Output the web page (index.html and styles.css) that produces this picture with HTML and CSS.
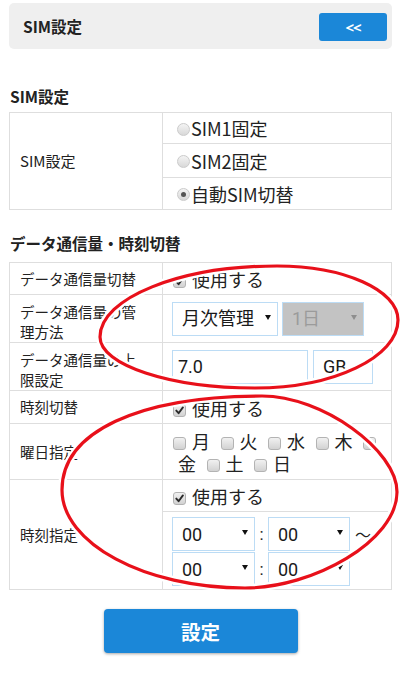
FILE: index.html
```html
<!DOCTYPE html>
<html lang="ja">
<head>
<meta charset="utf-8">
<title>SIM設定</title>
<link rel="stylesheet" href="styles.css">
</head>
<body>
<div class="page">
  <div class="topbar">
    <span class="topbar-title">SIM設定</span>
    <button class="back">&lt;&lt;</button>
  </div>

  <h2 class="sec sec1">SIM設定</h2>
  <div class="tbl tbl1">
    <div class="cell lab lab1 span3">SIM設定</div>
    <div class="cell val"><span class="radio"></span><span>SIM1固定</span></div>
    <div class="cell val"><span class="radio"></span><span>SIM2固定</span></div>
    <div class="cell val"><span class="radio on"></span><span>自動SIM切替</span></div>
  </div>

  <h2 class="sec sec2">データ通信量・時刻切替</h2>
  <div class="tbl tbl2">
    <div class="cell lab">データ通信量切替</div>
    <div class="cell val">
      <span class="cb"><svg viewBox="0 0 9 9"><path d="M1.3 4.6 L3.6 7.2 L7.9 1.4" fill="none" stroke="#2b2b2b" stroke-width="1.9" stroke-linecap="round" stroke-linejoin="round"/></svg></span><span class="cbtext">使用する</span>
    </div>

    <div class="cell lab two">データ通信量の管理方法</div>
    <div class="cell val gap4">
      <div class="sel w106"><span>月次管理</span><span class="arr"></span></div>
      <div class="sel w82 disabled"><span>1日</span><span class="arr"></span></div>
    </div>

    <div class="cell lab two">データ通信量の上限設定</div>
    <div class="cell val gap5">
      <div class="inp w136">7.0</div>
      <div class="inp w60 gb">GB</div>
    </div>

    <div class="cell lab">時刻切替</div>
    <div class="cell val">
      <span class="cb"><svg viewBox="0 0 9 9"><path d="M1.3 4.6 L3.6 7.2 L7.9 1.4" fill="none" stroke="#2b2b2b" stroke-width="1.9" stroke-linecap="round" stroke-linejoin="round"/></svg></span><span class="cbtext">使用する</span>
    </div>

    <div class="cell lab">曜日指定</div>
    <div class="cell days">
      <span class="cb"></span><span class="day">月</span>
      <span class="cb"></span><span class="day">火</span>
      <span class="cb"></span><span class="day">水</span>
      <span class="cb"></span><span class="day">木</span>
      <span class="cb"></span><span class="day">金</span>
      <span class="cb"></span><span class="day">土</span>
      <span class="cb"></span><span class="day">日</span>
    </div>

    <div class="cell lab">時刻指定</div>
    <div class="cell timecell">
      <div class="tsub1">
        <span class="cb"><svg viewBox="0 0 9 9"><path d="M1.3 4.6 L3.6 7.2 L7.9 1.4" fill="none" stroke="#2b2b2b" stroke-width="1.9" stroke-linecap="round" stroke-linejoin="round"/></svg></span><span class="cbtext">使用する</span>
      </div>
      <div class="tsub2">
        <div class="trow">
          <div class="sel w83"><span>00</span><span class="arr"></span></div>
          <span class="colon">:</span>
          <div class="sel w82"><span>00</span><span class="arr"></span></div>
          <span class="tilde">〜</span>
        </div>
        <div class="trow">
          <div class="sel w83"><span>00</span><span class="arr"></span></div>
          <span class="colon">:</span>
          <div class="sel w82"><span>00</span><span class="arr"></span></div>
        </div>
      </div>
    </div>
  </div>

  <button class="submit">設定</button>
</div>

<svg class="marks" width="400" height="673" viewBox="0 0 400 673">
  <g fill="none" stroke-linejoin="round">
    <path class="halo" d="M100 337 C100 298 180 266 277 266 C344 266 398 290 398 320 C398 357 334 388 255 388 C170 388 100 365 100 337 Z"/>
    <path class="halo" d="M62 490 C62 432 138 396 262 396 C322 396 397 450 397 492 C397 541 313 588 245 588 C144 588 62 543 62 490 Z"/>
    <path class="ring" d="M100 337 C100 298 180 266 277 266 C344 266 398 290 398 320 C398 357 334 388 255 388 C170 388 100 365 100 337 Z"/>
    <path class="ring" d="M62 490 C62 432 138 396 262 396 C322 396 397 450 397 492 C397 541 313 588 245 588 C144 588 62 543 62 490 Z"/>
  </g>
</svg>
</body>
</html>
```
FILE: styles.css
```css
* { box-sizing: border-box; }

html, body {
  margin: 0;
  padding: 0;
  background: #ffffff;
}

body {
  width: 400px;
  height: 673px;
  position: relative;
  overflow: hidden;
  font-family: "Noto Sans CJK JP", "Noto Sans", sans-serif;
  color: #222222;
}

.page {
  padding: 3px 8px 0 9px;
}

/* top bar */
.topbar {
  height: 46px;
  background: #efefef;
  border-radius: 5px;
  display: flex;
  align-items: center;
  justify-content: space-between;
  padding: 0 5px 0 14px;
}

.topbar-title {
  font-size: 15.5px;
  font-weight: 700;
  line-height: 20px;
}

.back {
  width: 68px;
  height: 28px;
  margin-top: 2px;
  padding: 0;
  border: 0;
  border-radius: 3px;
  background: #1b87d8;
  color: #ffffff;
  font: 700 15px "Noto Sans", "DejaVu Sans", sans-serif;
  letter-spacing: -1px;
}

/* section headings */
.sec {
  margin: 0;
  padding-left: 1px;
  font-size: 15.5px;
  font-weight: 700;
  line-height: 20px;
}

.sec1 { margin-top: 37px; margin-bottom: 6px; }
.sec2 { margin-top: 23px; margin-bottom: 9px; }

/* tables */
.tbl {
  display: grid;
  grid-template-columns: 153px 1fr;
  border-top: 1px solid #dedede;
  border-left: 1px solid #dedede;
}

.tbl1 { grid-template-rows: 31px 34px 32px; }
.tbl2 { grid-template-rows: 32px 48px 48px 33px 56px 110px; }

.cell {
  border-right: 1px solid #dedede;
  border-bottom: 1px solid #dedede;
  display: flex;
  align-items: center;
  min-width: 0;
}

.span3 { grid-row: 1 / span 3; }

.lab {
  font-size: 14.5px;
  line-height: 20px;
  padding: 0 12px 0 10px;
}

.lab1 { font-size: 15px; }

.lab.two { padding-top: 6px; }

.val {
  padding-left: 9px;
  font-size: 18px;
  line-height: 22px;
}

.gap4 { gap: 4px; }
.gap5 { gap: 5px; }

/* radio */
.radio {
  flex: none;
  width: 13px;
  height: 13px;
  margin: 2px 1px 0 5px;
  border-radius: 50%;
  border: 1px solid #cbcbcb;
  background: linear-gradient(#f4f4f4, #d8d8d8);
  position: relative;
}

.radio.on::after {
  content: "";
  position: absolute;
  left: 3px;
  top: 3px;
  width: 5px;
  height: 5px;
  border-radius: 50%;
  background: #555555;
}

/* checkbox */
.cb {
  flex: none;
  width: 13px;
  height: 13px;
  margin: 6px 0 0 1px;
  border: 1px solid #b3b3b3;
  border-radius: 3px;
  background: linear-gradient(#f1f1f1, #d2d2d2);
  display: flex;
  align-items: center;
  justify-content: center;
}

.cb svg {
  width: 9px;
  height: 9px;
  display: block;
}

.cbtext {
  margin: 1px 0 0 6px;
  font-size: 18px;
  line-height: 22px;
}

/* days */
.days {
  flex-wrap: wrap;
  align-items: center;
  align-content: flex-start;
  padding: 6px 10px 0 9px;
}

.days .cb { margin-top: 4px; }

.day {
  padding-left: 6px;
  margin-right: 9.5px;
  font-size: 18px;
  line-height: 22px;
}

/* selects & inputs */
.sel {
  flex: none;
  height: 34px;
  border: 1px solid #bcdcf5;
  background: #ffffff;
  display: flex;
  align-items: center;
  padding: 0 6px 0 9px;
  font-family: Roboto, "Noto Sans CJK JP", sans-serif;
  font-size: 18px;
  color: #1a1a1a;
}

.sel .arr {
  margin-left: auto;
  width: 0;
  height: 0;
  border-left: 3px solid transparent;
  border-right: 3px solid transparent;
  border-top: 5px solid #111111;
  margin-bottom: 3px;
}

.sel.disabled {
  background: #c3c3c3;
  color: #9b9b9b;
}

.sel.disabled .arr { border-top-color: #8e8e8e; }

.w106 { width: 106px; }
.w82 { width: 82px; }
.w83 { width: 83px; }
.w136 { width: 136px; }
.w60 { width: 60px; }

.inp {
  flex: none;
  height: 34px;
  border: 1px solid #bcdcf5;
  background: #ffffff;
  display: flex;
  align-items: center;
  padding-left: 5px;
  font-family: Roboto, "Noto Sans CJK JP", sans-serif;
  font-size: 18px;
  color: #1a1a1a;
}

.inp.gb { padding-left: 9px; }

/* time cell */
.timecell {
  flex-direction: column;
  align-items: stretch;
}

.tsub1 {
  height: 32px;
  flex: none;
  border-bottom: 1px solid #dedede;
  display: flex;
  align-items: center;
  padding-left: 9px;
}

.tsub2 {
  padding: 5px 0 0 9px;
  display: flex;
  flex-direction: column;
  gap: 1px;
}

.trow {
  display: flex;
  align-items: center;
}

.colon {
  width: 13px;
  text-align: center;
  font-family: Roboto, sans-serif;
  font-size: 17px;
}

.tilde {
  margin-left: 5px;
  font-size: 16px;
}

/* submit */
.submit {
  display: block;
  margin: 19px auto 0;
  width: 194px;
  height: 44px;
  padding: 0;
  border: 0;
  border-radius: 4px;
  background: #1b87d8;
  color: #ffffff;
  font: 700 19.5px "Noto Sans CJK JP", sans-serif;
  box-shadow: 0 1px 3px rgba(0, 0, 0, 0.35);
}

/* annotation overlay */
.marks {
  position: absolute;
  left: 0;
  top: 0;
  pointer-events: none;
}

.marks .halo {
  stroke: #ffffff;
  stroke-width: 8;
}

.marks .ring {
  stroke: #e8101a;
  stroke-width: 3.2;
}
```
